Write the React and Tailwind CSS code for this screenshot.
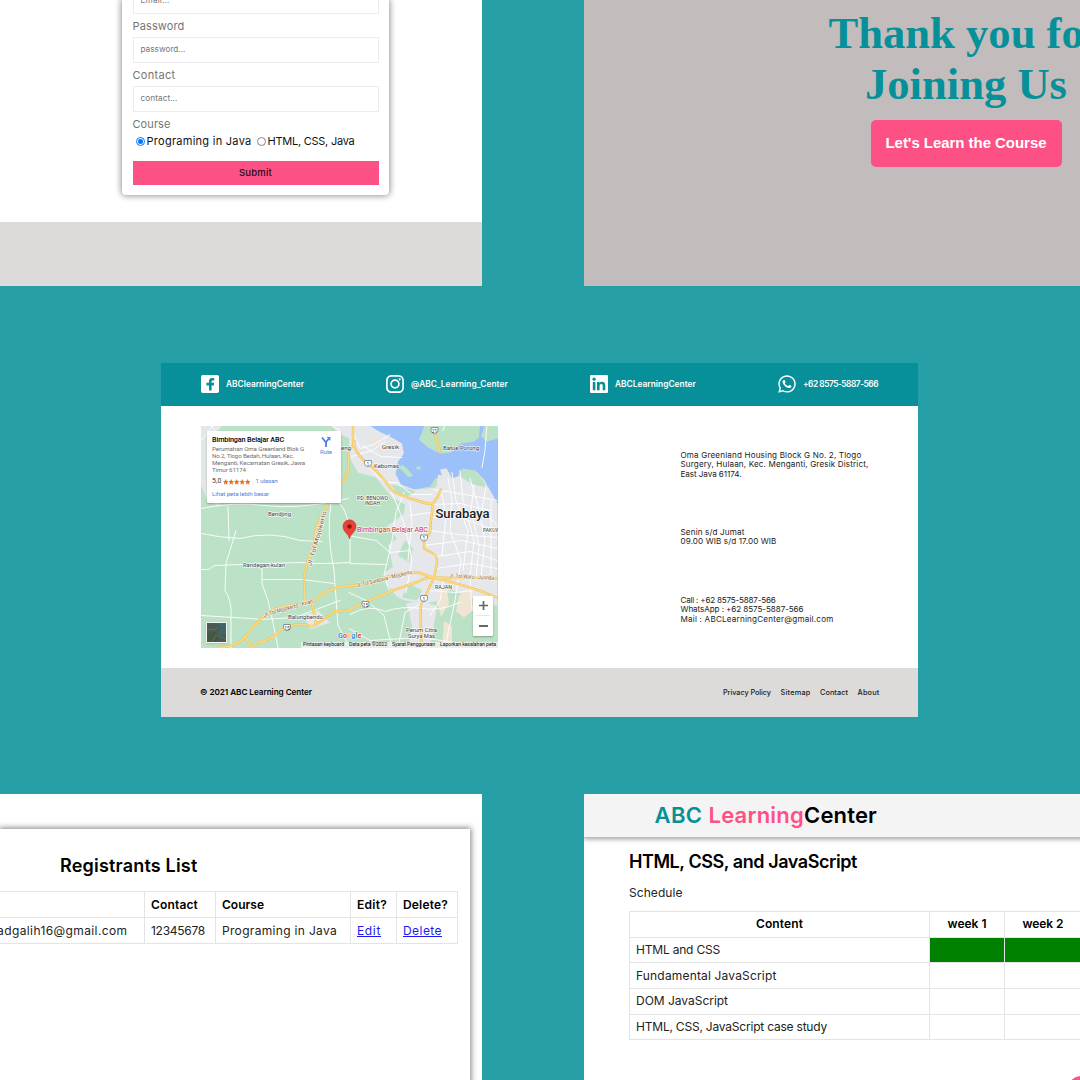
import { useLayoutEffect, useRef, useState } from "react";
import { FaWhatsapp } from "react-icons/fa";

// A single line of text whose tracking is computed so that it fills `w` pixels.
function Fit({ w, className = "", children }) {
  const ref = useRef(null);
  const [spacing, setSpacing] = useState(0);
  useLayoutEffect(() => {
    const el = ref.current;
    el.style.letterSpacing = "0px";
    const natural = el.getBoundingClientRect().width;
    const value = (w - natural) / el.textContent.length;
    el.style.letterSpacing = value + "px";
    setSpacing(value);
  }, [w]);
  return (
    <span ref={ref} className={"inline-block shrink-0 whitespace-nowrap " + className} style={{ letterSpacing: spacing }}>
      {children}
    </span>
  );
}

function Field({ label, labelWidth, placeholder, placeholderWidth }) {
  return (
    <div className="flex h-[49px] shrink-0 flex-col">
      <div className="flex h-[23px] items-center pt-[3px] text-[11px] leading-none text-[#757575]">
        <Fit w={labelWidth}>{label}</Fit>
      </div>
      <div className="flex h-[26px] items-center border border-[#ececee] pl-[7px] text-[8.2px] leading-none text-[#777]">
        <Fit w={placeholderWidth}>{placeholder}</Fit>
      </div>
    </div>
  );
}

function RegisterPanel() {
  return (
    <section className="flex h-[286px] w-[482px] shrink-0 flex-col items-start overflow-hidden bg-white">
      <div className="ml-[122px] flex h-[195px] w-[267px] shrink-0 flex-col justify-end rounded-b-[4px] bg-white px-[10.5px] pb-[10px] shadow-[0_0_6px_1px_rgba(0,0,0,0.42)]">
        <Field label="Email" labelWidth={31} placeholder="Email..." placeholderWidth={29} />
        <Field label="Password" labelWidth={52} placeholder="password..." placeholderWidth={45} />
        <Field label="Contact" labelWidth={43} placeholder="contact..." placeholderWidth={37} />
        <div className="mt-[1.5px] flex h-[22px] shrink-0 items-center text-[11px] leading-none text-[#757575]">
          <Fit w={38}>Course</Fit>
        </div>
        <div className="mt-[0.5px] flex h-[11px] shrink-0 items-center pl-[3px] text-[11px] leading-none text-[#111]">
          <span className="flex size-[9px] shrink-0 items-center justify-center rounded-full border border-[#0075ff]">
            <span className="size-[5px] rounded-full bg-[#0075ff]" />
          </span>
          <Fit w={105} className="ml-[2px]">Programing in Java</Fit>
          <span className="ml-[5px] size-[9px] shrink-0 rounded-full border border-[#858585]" />
          <Fit w={87} className="ml-[2px]">HTML, CSS, Java</Fit>
        </div>
        <div className="mt-[14.5px] flex h-[24px] shrink-0 items-center justify-center bg-[#fd5185] text-[9.5px] font-medium leading-none text-[#2b0d17]">
          <Fit w={33}>Submit</Fit>
        </div>
      </div>
      <div className="mt-[26.5px] h-[64.5px] w-full shrink-0 bg-[#dcdbd9]" />
    </section>
  );
}

function ThanksPanel() {
  return (
    <section className="flex h-[286px] w-[764px] shrink-0 flex-col items-center bg-[#c3bcbc]">
      <h1 className="mt-[8px] text-center font-['Liberation_Serif',serif] text-[44.6px] font-bold leading-[51px] text-[#069099]">
        Thank you for
        <br />
        Joining Us
      </h1>
      <button className="mt-[10px] flex h-[47px] w-[191px] items-center justify-center rounded-[5px] bg-[#fd5185] font-['Liberation_Sans',sans-serif] text-[15px] font-bold text-white">
        <Fit w={161}>Let's Learn the Course</Fit>
      </button>
    </section>
  );
}

function FacebookIcon() {
  return (
    <svg viewBox="0 0 18 18" className="size-[18px]">
      <rect width="18" height="18" rx="1.8" fill="#fff" />
      <path d="M8 15.4V10.4H5.4V7.8H8V6.4C8 4.2 9.1 3 11.2 3H13.2V5.4H11.8C10.9 5.4 10.6 5.8 10.6 6.6V7.8H13.2L12.8 10.4H10.6V15.4Z" fill="#079099" />
    </svg>
  );
}

function InstagramIcon() {
  return (
    <svg viewBox="0 0 18 18" className="size-[18px]" fill="none" stroke="#fff">
      <rect x="0.9" y="0.9" width="16.2" height="16.2" rx="4.4" strokeWidth="1.7" />
      <circle cx="9" cy="9" r="3.9" strokeWidth="1.7" />
      <circle cx="13.7" cy="4.3" r="1.1" fill="#fff" stroke="none" />
    </svg>
  );
}

function LinkedinIcon() {
  return (
    <svg viewBox="0 0 18 18" className="size-[18px]">
      <rect width="18" height="18" rx="1.3" fill="#fff" />
      <g fill="#079099">
        <circle cx="4.1" cy="4.2" r="1.6" />
        <path d="M2.8 7H5.4V15.2H2.8ZM7 7H9.5V8.1C10 7.3 10.9 6.8 12 6.8C14.5 6.8 15.3 8.3 15.3 10.7V15.2H12.7V11.2C12.7 10 12.6 9 11.3 9C10 9 9.6 9.9 9.6 11.1V15.2H7Z" />
      </g>
    </svg>
  );
}

const socials = [
  { icon: <FacebookIcon />, text: "ABClearningCenter", w: 78 },
  { icon: <InstagramIcon />, text: "@ABC_Learning_Center", w: 97 },
  { icon: <LinkedinIcon />, text: "ABCLearningCenter", w: 81 },
  { icon: <FaWhatsapp className="-mx-px size-[20px] text-white" />, text: "+62 8575-5887-566", w: 75 },
];

function Shield({ x, y, n }) {
  return (
    <g>
      <path d={`M${x - 3.2} ${y - 3}h6.4l.4 3.2q-.4 2.4-3.6 3q-3.2-.6-3.6-3z`} fill="#fff" stroke="#777" strokeWidth=".8" />
      <text x={x} y={y + 2} textAnchor="middle" fontSize="5" fill="#444">{n}</text>
    </g>
  );
}

const highways = [
  "M353 424V440Q355 452 364 460L377 471Q386 481 392 490Q402 496 417 500Q428 504 433 503Q438 497 441 489",
  "M433 503L431 520L430 532L424 540V548L433 553Q439 556 436 568L434 577L428 590L421 604Q420 620 422 647",
  "M355 441L349 451L348 472L343 480L330 500L317 524L313 548Q306 562 304 578L305 600",
  "M219 647Q238 646 246 635L261 618Q273 606 292 605L312 602Q322 592 337 587L352 585L372 583Q386 575 402 573L418 572L433 577Q452 578 468 577L497 578",
  "M245 636L252 647L257 642Q272 640 280 630L287 627Q300 621 312 626Q322 621 334 611L348 610L360 604L390 591L416 582Q424 577 434 577",
  "M312 602L316 624",
  "M434 430L440 451",
  "M437 578Q468 585 497 597",
];

const minorRoads = [
  "M201 508Q235 501 265 505T340 500L348 498",
  "M201 533Q220 537 240 538Q270 530 300 540L322 541",
  "M201 569H209L214 565L300 562Q320 564 349 562",
  "M236 530L226 563L225 590Q232 600 231 616V647",
  "M262 567L262 583L268 600L273 622L278 647",
  "M263 579H302L334 583",
  "M201 615L250 618L262 619L295 617L340 600",
  "M331 503Q326 530 334 570L338 625L350 647",
  "M340 503Q350 515 350 540V563L385 564",
  "M348 535L376 540L390 552L410 550",
  "M350 614Q370 603 385 611Q402 605 421 608T460 602",
  "M352 430L360 448L374 444L390 434",
  "M352 456L372 450L385 441",
  "M362 445L381 456L402 457",
  "M364 462Q373 470 379 478L387 482H397L412 494H432",
  "M404 492L396 512L392 540L384 575L390 592",
  "M391 491Q406 520 412 560L406 592",
  "M349 592L366 600L384 615L392 647",
  "M398 647L405 612L421 603",
  "M349 628L370 640L420 637L470 644",
  "M210 424L222 437M330 424L340 430M201 440L214 424",
  "M228 506L229 540",
];

const cityRoads = [
  "M448 478L452 500L450 530L461 560L455 600L445 647",
  "M460 470L463 500L474 540L470 577L472 610",
  "M470 478L478 505L485 540L481 577",
  "M486 485L482 510L497 525",
  "M434 489L460 493L497 500",
  "M433 504L460 503L490 510",
  "M431 517H460L497 530",
  "M430 530L458 534L497 537",
  "M424 545L462 540L497 548",
  "M437 556L470 551L497 560",
  "M436 568L470 563L497 568",
  "M441 489L446 515L442 555",
  "M452 472L456 500L468 530L463 570",
  "M410 502L412 520L408 560",
  "M410 515L431 512M410 530L428 526",
  "M430 590L455 592L473 590",
  "M443 580L440 600L430 615",
  "M474 484L471 510L479 545L476 577",
  "M491 500V577",
  "M445 424L443 430M487 424L485 450L482 467",
];

const places = [
  { x: 382, y: 448.3, w: 17, t: "Gresik", s: 6 },
  { x: 374, y: 467.5, w: 25, t: "Kebomas", s: 6 },
  { x: 443, y: 449.3, w: 36, t: "Batoe Porong", s: 6 },
  { x: 357, y: 499.3, w: 31, t: "PD. BENOWO", s: 4.6 },
  { x: 365, y: 504, w: 15, t: "INDAH", s: 4.6 },
  { x: 268, y: 515.6, w: 23, t: "Bendjing", s: 6 },
  { x: 243, y: 566, w: 42, t: "Randegan-kulan", s: 6 },
  { x: 288, y: 618.5, w: 35, t: "Balongbendo", s: 6 },
  { x: 406, y: 631, w: 31, t: "Perum Citra", s: 6.2 },
  { x: 408, y: 637, w: 27, t: "Surya Mas", s: 6.2 },
  { x: 435, y: 588.5, w: 17, t: "RAJAN", s: 4.6 },
  { x: 483, y: 531, w: 17, t: "PAKUW", s: 4.6 },
  { x: 341, y: 449.5, w: 10, t: "eng", s: 6 },
];

function MapDrawing() {
  return (
    <svg viewBox="201 425.5 297 222.5" className="block h-[222.5px] w-[297px] font-[Roboto,sans-serif]">
      <rect x="201" y="425" width="297" height="223" fill="#bbe2c6" />
      <path d="M201 425H222L214 436L207 470L219 495V507L206 497L201 485Z" fill="#e3e7e8" />
      <g fill="#e6e7eb">
        <path d="M348 424H372L386 434L402 441L404 452L398 463L395 474L404 485L418 489L436 487L440 468L497 490V605L470 598L450 588L440 600L425 603L405 600L388 592L384 573L393 566L388 545L397 538L387 526L404 513L405 504L392 497L376 477L358 472L350 458Z" />
        <path d="M406 603L420 600L438 606L434 647H408L412 625Z" />
        <path d="M330 424H350V438L340 434ZM304 615L318 610L330 622L310 629Z" />
      </g>
      <g fill="#bbe2c6">
        <path d="M348 575L366 590L388 585L400 600L410 612L407 637L380 647H348Z" />
        <path d="M391 484L404 487L416 491L408 496L397 493ZM405 540L413 548L409 562L398 555ZM409 583L422 590L417 600L402 597Z" />
        <path d="M438 601L470 597L497 606V647H430Z" />
      </g>
      <g fill="#f0e4d4">
        <path d="M440 585L447 590L449 603L441 616L437 602ZM459 595L472 588L473 610L464 617L456 611ZM475 470L484 476L487 487L476 481ZM444 620L452 626V647H442ZM368 438L378 437L375 446ZM391 440L399 443L395 449Z" />
      </g>
      <path d="M368 424H498V504L492 493L484 479L475 470L462 468L460 475L452 478L448 470H441L444 480L436 477L430 486L414 489L401 484L396 474L398 461L404 453L402 443L390 436L379 431Z" fill="#9cc0fa" />
      <path d="M425 424H480L479 437L474 441L461 443L451 452L440 453L428 447L419 439Z" fill="#bbe2c6" />
      <path d="M485 424L481 436L487 441L498 438V424Z" fill="#bbe2c6" />
      <path d="M458 475L462 469L474 470L482 478L487 487L473 484Z" fill="#bbe2c6" />
      <path d="M399 467L402 464L406 467L413 475L409 477L403 471ZM416 466L420 466L421 469L417 469Z" fill="#bbe2c6" />
      <path d="M437 487L438 474L442 475L440 469L447 468L449 480L456 478L458 490Z" fill="#e6e7eb" />
      <g fill="none" stroke="#fff" strokeLinejoin="round" strokeLinecap="round">
        {cityRoads.map((d) => <path key={d} d={d} strokeWidth=".9" />)}
        {minorRoads.map((d) => <path key={d} d={d} strokeWidth=".9" />)}
      </g>
      <g fill="none" strokeLinejoin="round" strokeLinecap="round">
        {highways.map((d) => <path key={d} d={d} stroke="#f0bf55" strokeWidth="2.4" />)}
        {highways.map((d) => <path key={d} d={d} stroke="#fbdb83" strokeWidth="1.4" />)}
      </g>
      <Shield x={368} y={463} n="1" />
      <Shield x={434.5} y={430} n="21" />
      <Shield x={424} y={537.5} n="1" />
      <Shield x={424} y={598} n="1" />
      <Shield x={365.5} y={604} n="15" />
      <Shield x={287} y={627} n="15" />
      <g stroke="#fff" strokeWidth="1.3" strokeOpacity=".8" paintOrder="stroke" strokeLinejoin="round">
        <g fill="#3c4147">
          {places.map((p) => (
            <text key={p.t} x={p.x} y={p.y} fontSize={p.s} textLength={p.w} lengthAdjust="spacingAndGlyphs">{p.t}</text>
          ))}
        </g>
        <g fill="#82603c" fontSize="5.8">
          <text transform="translate(311 566) rotate(-74)" textLength="57" lengthAdjust="spacingAndGlyphs">Jl. Tol Mojokerto</text>
          <text transform="translate(264 616.5) rotate(-16)" textLength="51" lengthAdjust="spacingAndGlyphs">Jl. Tol Mojokerto - Krian</text>
          <text transform="translate(357 587) rotate(-14)" textLength="57" lengthAdjust="spacingAndGlyphs">Jl. Tol Surabaya - Mojokerto</text>
          <text transform="translate(449 577) rotate(3)" textLength="45" lengthAdjust="spacingAndGlyphs">Jl. Tol Waru - Juanda</text>
        </g>
        <text x="435.5" y="517.7" fontSize="13" fontWeight="500" fill="#202124" textLength="54">Surabaya</text>
        <text x="357" y="531" fontSize="7.2" fill="#cf3039" textLength="71">Bimbingan Belajar ABC</text>
      </g>
      <path d="M349.5 538.5C348.8 533.5 343 531.5 343 525.8A6.5 6.5 0 0 1 356 525.8C356 531.5 350.2 533.5 349.5 538.5Z" fill="#ea4335" stroke="#c5221f" strokeWidth=".5" />
      <circle cx="349.5" cy="526" r="2.2" fill="#8c1410" />
      <text x="338" y="637.5" fontSize="7.2" fontWeight="700" textLength="23.5" stroke="#fff" strokeWidth=".9" paintOrder="stroke">
        <tspan fill="#4285f4">G</tspan><tspan fill="#ea4335">o</tspan><tspan fill="#fbbc04">o</tspan><tspan fill="#4285f4">g</tspan><tspan fill="#34a853">l</tspan><tspan fill="#ea4335">e</tspan>
      </text>
    </svg>
  );
}

function MapCard() {
  return (
    <div className="absolute left-[5.5px] top-[5px] flex h-[72.5px] w-[134.5px] justify-between rounded-[1px] bg-white pl-[5.5px] pr-[9px] pt-[4.5px] font-[Roboto,sans-serif] shadow-[0_1px_2px_rgba(0,0,0,0.3)]">
      <div className="flex flex-col items-start text-[6.2px] leading-[7px] text-[#6c7176]">
        <Fit w={72} className="mb-[2px] text-[7.2px] font-medium leading-[9px] text-black">Bimbingan Belajar ABC</Fit>
        <Fit w={92}>Perumahan Oma Greenland Blok G</Fit>
        <Fit w={82}>No.2, Tlogo Bedah, Hulaan, Kec.</Fit>
        <Fit w={93}>Menganti, Kecamatan Gresik, Jawa</Fit>
        <Fit w={34}>Timur 61174</Fit>
        <div className="mt-[3.5px] flex h-[8px] items-center">
          <Fit w={9.5} className="text-[7px] text-[#3c4043]">5,0</Fit>
          <svg viewBox="0 0 27.5 6" className="ml-[1.5px] h-[6px] w-[27.5px]" fill="#e7711b">
            {[0, 1, 2, 3, 4].map((i) => (
              <path key={i} transform={`translate(${i * 5.5} 0)`} d="M2.7 0L3.6 2.1L5.5 2.2L4 3.6L4.5 5.8L2.7 4.6L.9 5.8L1.4 3.6L0 2.2L1.8 2.1Z" />
            ))}
          </svg>
          <Fit w={22} className="ml-[5px] text-[#4a80e8]">1 ulasan</Fit>
        </div>
        <Fit w={57} className="mt-[5px] text-[#4a80e8]">Lihat peta lebih besar</Fit>
      </div>
      <div className="flex flex-col items-center text-[6px] leading-[7px] text-[#4a80e8]">
        <svg viewBox="0 0 10 11" className="mt-[0.5px] h-[11px] w-[10px]" fill="none" stroke="#4a80e8" strokeWidth="1.8">
          <path d="M5 11V6.5L1 1.5M5 6L7.5 3" />
          <path d="M5.6 1H9.4V5Z" fill="#4a80e8" stroke="none" />
        </svg>
        <Fit w={12} className="mt-px">Rute</Fit>
      </div>
    </div>
  );
}

function MapView() {
  return (
    <div className="relative h-[222.5px] w-[297px] overflow-hidden">
      <MapDrawing />
      <MapCard />
      <div className="absolute bottom-[5px] left-[5px] h-[21px] w-[21px] border border-[#f4f4f4] bg-[#4b5f55] shadow">
        <svg viewBox="0 0 19 19" className="size-full" fill="none">
          <rect width="19" height="19" fill="#4a5a50" />
          <path d="M10 0L14 5L10 10L14 13L19 10V0Z" fill="#3e666b" />
          <path d="M0 12L7 8L12 12L10 19H0Z" fill="#435842" />
          <path d="M0 6L7 7L11 4M5 19L9 12L19 16" stroke="#67736a" strokeWidth=".8" />
        </svg>
      </div>
      <div className="absolute bottom-[12px] right-[5px] flex h-[40px] w-[20px] flex-col items-center rounded-[1px] bg-white shadow-[0_1px_2px_rgba(0,0,0,0.3)]">
        <div className="flex h-[20px] w-[14px] items-center justify-center border-b border-[#e6e6e6]">
          <svg viewBox="0 0 9 9" className="size-[9px]" stroke="#666" strokeWidth="1.7"><path d="M0 4.5H9M4.5 0V9" /></svg>
        </div>
        <div className="flex h-[20px] items-center">
          <div className="h-[2px] w-[9px] bg-[#666]" />
        </div>
      </div>
      <div className="absolute bottom-0 right-0 flex h-[6.5px] items-center gap-[5px] bg-[#eef2ef]/85 px-[2px] font-[Roboto,sans-serif] text-[5.2px] leading-none text-[#111]">
        <Fit w={41}>Pintasan keyboard</Fit>
        <Fit w={38}>Data peta ©2022</Fit>
        <Fit w={43}>Syarat Penggunaan</Fit>
        <Fit w={56}>Laporkan kesalahan peta</Fit>
      </div>
    </div>
  );
}

function ContactPanel() {
  return (
    <section className="ml-[161px] flex h-[354px] w-[757px] shrink-0 flex-col bg-white">
      <div className="flex h-[42.5px] shrink-0 items-center justify-between bg-[#079099] pl-[40px] pr-[40px]">
        {socials.map((s) => (
          <div key={s.text} className="flex items-center gap-[7px] text-[8.3px] font-semibold leading-none text-white">
            {s.icon}
            <Fit w={s.w}>{s.text}</Fit>
          </div>
        ))}
      </div>
      <div className="flex h-[262.5px] shrink-0 pl-[40px] pt-[20px]">
        <MapView />
        <div className="ml-[182.5px] flex flex-col text-[8.1px] leading-[9.5px] text-[#222]">
          <div className="mt-[25px] flex flex-col items-start">
            <Fit w={181}>Oma Greenland Housing Block G No. 2, Tlogo</Fit>
            <Fit w={188}>Surgery, Hulaan, Kec. Menganti, Gresik District,</Fit>
            <Fit w={61}>East Java 61174.</Fit>
          </div>
          <div className="mt-[48.5px] flex flex-col items-start">
            <Fit w={64}>Senin s/d Jumat</Fit>
            <Fit w={96}>09.00 WIB s/d 17.00 WIB</Fit>
          </div>
          <div className="mt-[49px] flex flex-col items-start">
            <Fit w={95}>Call : +62 8575-5887-566</Fit>
            <Fit w={123}>WhatsApp : +62 8575-5887-566</Fit>
            <Fit w={153}>Mail : ABCLearningCenter@gmail.com</Fit>
          </div>
        </div>
      </div>
      <footer className="flex h-[49px] shrink-0 items-center justify-between bg-[#dcdbd9] pl-[39px] pr-[38.5px] text-[7.3px] leading-none text-[#222]">
        <Fit w={112} className="text-[8.2px] font-semibold text-black">© 2021 ABC Learning Center</Fit>
        <div className="flex gap-[9.5px] font-medium">
          <Fit w={48}>Privacy Policy</Fit>
          <Fit w={30}>Sitemap</Fit>
          <Fit w={28}>Contact</Fit>
          <Fit w={22}>About</Fit>
        </div>
      </footer>
    </section>
  );
}

function RegistrantsPanel() {
  const cell = "border border-[#e4e4e4] p-0 pl-[6px] text-left font-normal";
  const head = "border border-[#e4e4e4] p-0 pl-[6px] text-left font-semibold text-black";
  return (
    <section className="flex h-[286px] w-[482px] shrink-0 flex-col items-start overflow-hidden bg-white">
      <div className="mt-[35px] flex h-[300px] w-[469.5px] shrink-0 flex-col items-start bg-white shadow-[0_0_6px_1px_rgba(0,0,0,0.5)]">
        <h2 className="ml-[60px] mt-[26px] text-[18px] font-semibold leading-[22px] text-black">
          <Fit w={137.5}>Registrants List</Fit>
        </h2>
        <div className="mt-[14px] flex w-[458px] justify-end overflow-hidden">
          <table className="w-[478px] shrink-0 table-fixed border-collapse text-[12px] leading-none text-[#222]">
            <colgroup>
              <col className="w-[165px]" />
              <col className="w-[71px]" />
              <col className="w-[135px]" />
              <col className="w-[46px]" />
              <col className="w-[61px]" />
            </colgroup>
            <tbody>
              <tr className="h-[26px]">
                <th className={head} />
                <th className={head}><Fit w={47}>Contact</Fit></th>
                <th className={head}><Fit w={42}>Course</Fit></th>
                <th className={head}><Fit w={30}>Edit?</Fit></th>
                <th className={head}><Fit w={45}>Delete?</Fit></th>
              </tr>
              <tr className="h-[26px]">
                <td className="border border-[#e4e4e4] p-0 pr-[16.5px]">
                  <div className="flex justify-end"><Fit w={156}>ahmadgalih16@gmail.com</Fit></div>
                </td>
                <td className={cell}><Fit w={54}>12345678</Fit></td>
                <td className={cell}><Fit w={115}>Programing in Java</Fit></td>
                <td className={cell}><Fit w={24} className="text-[#1a1aee] underline">Edit</Fit></td>
                <td className={cell}><Fit w={39} className="text-[#1a1aee] underline">Delete</Fit></td>
              </tr>
            </tbody>
          </table>
        </div>
      </div>
    </section>
  );
}

const lessons = [
  { name: "HTML and CSS", w: 84, done: true },
  { name: "Fundamental JavaScript", w: 140.5 },
  { name: "DOM JavaScript", w: 92 },
  { name: "HTML, CSS, JavaScript case study", w: 191 },
];

function CoursePanel() {
  const line = "border border-[#e4e4e4] p-0";
  return (
    <section className="relative flex h-[286px] w-[764px] shrink-0 flex-col items-start overflow-hidden bg-white">
      <header className="flex h-[42.5px] w-full shrink-0 items-center bg-[#f4f4f4] pl-[70.5px] text-[22px] font-semibold leading-none shadow-[0_1px_5px_1px_rgba(0,0,0,0.38)]">
        <Fit w={48} className="text-[#079099]">ABC</Fit>
        <Fit w={95.5} className="ml-[6px] text-[#fd5185]">Learning</Fit>
        <Fit w={73} className="text-black">Center</Fit>
      </header>
      <h2 className="ml-[45px] mt-[14px] text-[18px] font-semibold leading-[22px] text-black">
        <Fit w={228}>HTML, CSS, and JavaScript</Fit>
      </h2>
      <p className="ml-[45px] mt-[12.5px] text-[12px] leading-[15px] text-[#222]">
        <Fit w={53.5}>Schedule</Fit>
      </p>
      <table className="ml-[45px] mt-[11px] w-[600px] shrink-0 table-fixed border-collapse text-[12px] leading-none text-[#222]">
        <colgroup>
          <col className="w-[300px]" />
          <col className="w-[75px]" />
          <col className="w-[77px]" />
          <col />
        </colgroup>
        <tbody>
          <tr className="h-[25.6px] text-black">
            <th className={line}><Fit w={47} className="font-semibold">Content</Fit></th>
            <th className={line}><Fit w={39} className="font-semibold">week 1</Fit></th>
            <th className={line}><Fit w={41} className="font-semibold">week 2</Fit></th>
            <th className={line} />
          </tr>
          {lessons.map((l) => (
            <tr key={l.name} className="h-[25.7px]">
              <td className="border border-[#e4e4e4] p-0 pl-[6px]"><Fit w={l.w}>{l.name}</Fit></td>
              {[1, 2, 3].map((n) => (
                <td key={n} className={l.done ? "border border-[#e4e4e4] bg-[#008000] p-0" : line} />
              ))}
            </tr>
          ))}
        </tbody>
      </table>
      <div className="absolute left-[482px] top-[281.5px] size-[32px] rounded-full bg-[#fd5185]" />
    </section>
  );
}

export default function App() {
  return (
    <main className="flex h-[1080px] w-[1080px] flex-col gap-[77px] overflow-hidden bg-[#279fa7] font-[Inter,sans-serif]">
      <div className="flex shrink-0 gap-[102px]">
        <RegisterPanel />
        <ThanksPanel />
      </div>
      <ContactPanel />
      <div className="flex shrink-0 gap-[102px]">
        <RegistrantsPanel />
        <CoursePanel />
      </div>
    </main>
  );
}
